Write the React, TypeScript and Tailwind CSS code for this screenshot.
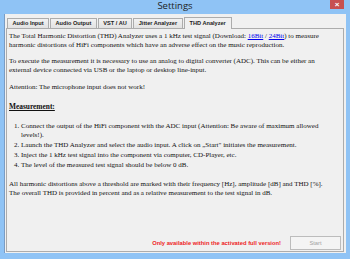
import React from 'react';

const serif = { fontFamily: '"Liberation Serif", "Times New Roman", serif' };

function Tab({ label, active }: { label: string; active?: boolean }) {
  if (active) {
    return (
      <div className="relative -mb-px flex h-[12px] items-center border border-b-0 border-[#acacac] bg-[#f0f0f0] px-[5px] text-[5.6px] font-bold text-[#222]">
        {label}
      </div>
    );
  }
  return (
    <div className="mt-[2px] flex h-[10px] items-center border border-b-0 border-[#acacac] bg-gradient-to-b from-[#f2f2f2] to-[#e2e2e2] px-[4.5px] text-[5.6px] font-bold text-[#222]">
      {label}
    </div>
  );
}

export default function App() {
  return (
    <div
      className="flex h-[259px] w-[350px] flex-col bg-[#8fc3f5]"
      style={{ fontFamily: '"Liberation Sans", Arial, sans-serif' }}
    >
      {/* title bar */}
      <div className="flex h-[14px] shrink-0 items-start">
        <div className="flex h-[13px] flex-1 items-center justify-center pl-[20px] text-[9.5px] text-[#1e1e1e]" style={{ fontFamily: '"Open Sans", sans-serif' }}>
          Settings
        </div>
        <div className="mr-[6px] flex h-[9px] w-[14px] items-center justify-center bg-[#c75050] text-[8px] font-bold leading-none text-white">
          ×
        </div>
      </div>

      {/* client area */}
      <div className="mx-[4px] mb-[6px] flex flex-1 flex-col border-l border-[#7a9cc4] bg-[#f0f0f0] pt-[2px] pr-[2px] pl-[1px]">
        <div className="flex items-end gap-[1px] pl-[1px]">
          <Tab label="Audio Input" />
          <Tab label="Audio Output" />
          <Tab label="VST / AU" />
          <Tab label="Jitter Analyzer" />
          <Tab label="THD Analyzer" active />
        </div>

        <div className="mb-[1px] flex flex-1 flex-col border border-[#acacac] bg-[#f0f0f0] pt-[3px] pl-[2px] pr-[2px] pb-[1px]">
          <div className="w-[322px] text-[7px] leading-[8.5px] text-[#111]" style={serif}>
            <p>
              The Total Harmonic Distortion (THD) Analyzer uses a 1 kHz test signal (Download:{' '}
              <span className="text-[#0000ee] underline">16Bit</span> /{' '}
              <span className="text-[#0000ee] underline">24Bit</span>) to measure harmonic distortions of HiFi
              components which have an adverse effect on the music reproduction.
            </p>
            <p className="mt-[8px]">
              To execute the measurement it is necessary to use an analog to digital converter (ADC). This can be
              either an external device connected via USB or the laptop or desktop line-input.
            </p>
            <p className="mt-[9px]">Attention: The microphone input does not work!</p>
            <p className="mt-[11px] text-[7.4px] font-bold underline">Measurement:</p>
            <ol className="mt-[11px] flex list-decimal flex-col gap-[1.5px] pl-[12px] pr-[8px]">
              <li>
                Connect the output of the HiFi component with the ADC input (Attention: Be aware of maximum allowed
                levels!).
              </li>
              <li>Launch the THD Analyzer and select the audio input. A click on „Start" initiates the measurement.</li>
              <li>Inject the 1 kHz test signal into the component via computer, CD-Player, etc.</li>
              <li>The level of the measured test signal should be below 0 dB.</li>
            </ol>
            <p className="mt-[11px]">
              All harmonic distortions above a threshold are marked with their frequency [Hz], amplitude [dB] and
              THD [%]. The overall THD is provided in percent and as a relative measurement to the test signal in dB.
            </p>
          </div>

          <div className="mt-auto flex items-center justify-end gap-[9px]">
            <span className="text-[5.8px] font-bold text-[#ee1c24]">
              Only available within the activated full version!
            </span>
            <div className="flex h-[14px] w-[51px] items-center justify-center border border-[#bcbcbc] bg-[#f4f4f4] text-[5.8px] text-[#a3a3a3]">
              Start
            </div>
          </div>
        </div>
      </div>
    </div>
  );
}
